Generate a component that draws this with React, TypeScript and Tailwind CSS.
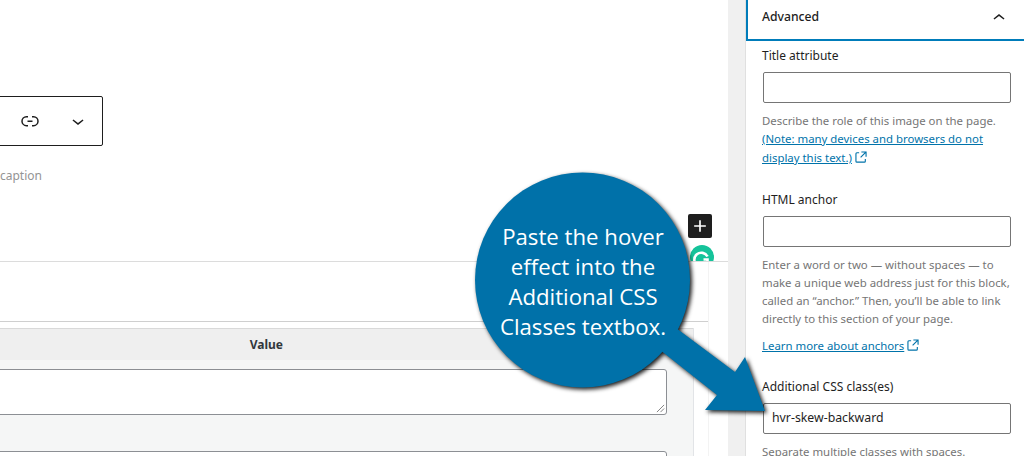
import type { ReactNode } from "react";

const BODY_FONT = "font-['Noto_Sans',sans-serif]";

function ExternalIcon() {
  return (
    <svg viewBox="0 0 24 24" className="inline-block h-[18px] w-[18px] fill-[#0073aa] align-[-4px]">
      <path d="M19.5 4.5h-7V6h4.44l-5.97 5.97 1.06 1.06L18 7.06v4.44h1.5v-7Zm-13 1a2 2 0 0 0-2 2v10a2 2 0 0 0 2 2h10a2 2 0 0 0 2-2v-3H17v3a.5.5 0 0 1-.5.5h-10a.5.5 0 0 1-.5-.5v-10a.5.5 0 0 1 .5-.5h3V5.5h-3Z" />
    </svg>
  );
}

function Field({ label, value, children }: { label: string; value?: string; children: ReactNode }) {
  return (
    <div>
      <p className="h-[18px] text-[12px] leading-[18px] text-[#1e1e1e]">{label}</p>
      <div className="mt-[7px] ml-px flex h-[31px] w-[248px] items-center rounded-[2px] border border-[#757575] bg-white px-2 text-[12.3px] text-[#1e1e1e]">
        {value}
      </div>
      <div className="mt-[9px] text-[11.4px] leading-[18px] text-[#757575]">{children}</div>
    </div>
  );
}

function Sidebar() {
  return (
    <aside className={`flex w-[278px] shrink-0 flex-col overflow-hidden bg-white ${BODY_FONT}`}>
      <div className="flex h-[41px] shrink-0 items-center justify-between border-b-[2px] border-l-[2px] border-[#007cba] pr-[13px] pb-[4px] pl-[14px]">
        <span className="text-[12.2px] font-medium text-[#1e1e1e]">Advanced</span>
        <svg viewBox="0 0 24 24" className="h-6 w-6 fill-[#1e1e1e]">
          <path d="M6.5 12.4L12 8l5.5 4.4-.9 1.2L12 10l-4.6 3.6-.9-1.2z" />
        </svg>
      </div>
      <div className="flex flex-col pt-[6px] pl-4">
        <Field label="Title attribute">
          <p>Describe the role of this image on the page.</p>
          <p>
            <a className="text-[#0073aa] underline">
              (Note: many devices and browsers do not
              <br />
              display this text.)
            </a>
            <ExternalIcon />
          </p>
        </Field>
        <div className="mt-[24px]">
          <Field label="HTML anchor">
            <p>Enter a word or two — without spaces — to</p>
            <p>make a unique web address just for this block,</p>
            <p>called an “anchor.” Then, you’ll be able to link</p>
            <p>directly to this section of your page.</p>
            <p className="mt-2">
              <a className="text-[#0073aa] underline">Learn more about anchors</a>
              <ExternalIcon />
            </p>
          </Field>
        </div>
        <div className="mt-[23px]">
          <Field label="Additional CSS class(es)" value="hvr-skew-backward">
            <p>Separate multiple classes with spaces.</p>
          </Field>
        </div>
      </div>
    </aside>
  );
}

function Editor() {
  return (
    <main className={`flex min-w-0 flex-1 flex-col bg-white ${BODY_FONT}`}>
      <div className="mt-[96px] -ml-px flex h-[50px] w-[104px] shrink-0 items-center justify-end gap-[24px] rounded-r-[2px] border border-[#1e1e1e] pr-[12px]">
        <svg viewBox="0 0 24 24" className="h-6 w-6 fill-[#1e1e1e]">
          <path d="M10 17.389H8.444A5.194 5.194 0 1 1 8.444 7H10v1.5H8.444a3.694 3.694 0 0 0 0 7.389H10v1.5ZM14 7h1.556a5.194 5.194 0 0 1 0 10.39H14v-1.5h1.556a3.694 3.694 0 0 0 0-7.39H14V7Zm-4.5 6h5v-1.5h-5V13Z" />
        </svg>
        <svg viewBox="0 0 24 24" className="h-6 w-6 fill-[#1e1e1e]">
          <path d="M17.5 11.6L12 16l-5.5-4.4.9-1.2L12 14l4.6-3.6.9 1.2z" />
        </svg>
      </div>
      <p className="mt-[21px] h-[18px] shrink-0 text-[12px] leading-[18px] text-[#949494]">caption</p>

      <div className="mt-[29px] flex h-[24px] shrink-0 justify-end pr-4">
        <div className="flex h-6 w-6 items-center justify-center rounded-[2px] bg-[#1e1e1e]">
          <svg viewBox="0 0 24 24" className="h-5 w-5 fill-white">
            <path d="M11 5h2v6h6v2h-6v6h-2v-6H5v-2h6z" />
          </svg>
        </div>
      </div>
      <div className="mt-[7px] flex h-[16px] shrink-0 justify-end overflow-hidden pr-[14px]">
        <svg viewBox="0 0 24 24" className="h-6 w-6 shrink-0">
          <circle cx="12" cy="12" r="12" fill="#15c39a" />
          <path d="M17.5 11.5A7 7 0 1 0 17.5 18V14.5h-4" fill="none" stroke="#fff" strokeWidth="2.6" />
        </svg>
      </div>

      <div className="min-h-0 flex-1 overflow-hidden border-t border-[#dcdcdc]">
        <div className="h-full w-[709px] border-r border-[#f3f3f3] pt-[59px]">
          <div className="h-[140px] border-t border-[#cfcfcf] pt-[6px]">
            <div className="h-full w-[694px] overflow-hidden border-r border-[#e2e4e7] bg-[#f5f6f6]">
              <div className="flex h-[32px] items-center justify-end border-t border-[#d9d9d9] bg-[#efefef] pr-[410px] text-[12px] font-bold text-[#32373c]">
                Value
              </div>
              <div className="-ml-1 pt-[9px]">
                <div className="relative h-[46px] w-[671px] rounded-[3px] border border-[#8c8f94] bg-white">
                  <svg viewBox="0 0 10 10" className="absolute right-px bottom-px h-[9px] w-[9px] stroke-[#777]">
                    <path d="M1 9L9 1M5 9l4-4" />
                  </svg>
                </div>
                <div className="mt-[36px] h-[20px] w-[671px] rounded-[3px] border border-[#8c8f94] bg-white" />
              </div>
            </div>
          </div>
        </div>
      </div>
    </main>
  );
}

export default function App() {
  return (
    <div className="relative flex h-[456px] w-[1024px] overflow-hidden bg-white">
      <Editor />
      <div className="w-[18px] shrink-0 border-r border-[#e0e0e0] bg-[#f0f0f0]" />
      <Sidebar />

      {/* callout drawn over the page */}
      <svg viewBox="0 0 1024 456" className="pointer-events-none absolute inset-0 h-[456px] w-[1024px] drop-shadow-[2px_2px_2px_rgba(0,0,0,0.9)]">
        <circle cx="582.5" cy="280" r="107.5" fill="#0071a9" />
        <path d="M672 325L735 372L745 357L765 411L705 410L717 395L655 346Z" fill="#0071a9" />
      </svg>
      <div className="absolute top-[222px] left-[475px] w-[216px] text-center font-['Open_Sans',sans-serif] text-[22.2px] leading-[30px] text-white">
        Paste the hover
        <br />
        effect into the
        <br />
        Additional CSS
        <br />
        Classes textbox.
      </div>
    </div>
  );
}
